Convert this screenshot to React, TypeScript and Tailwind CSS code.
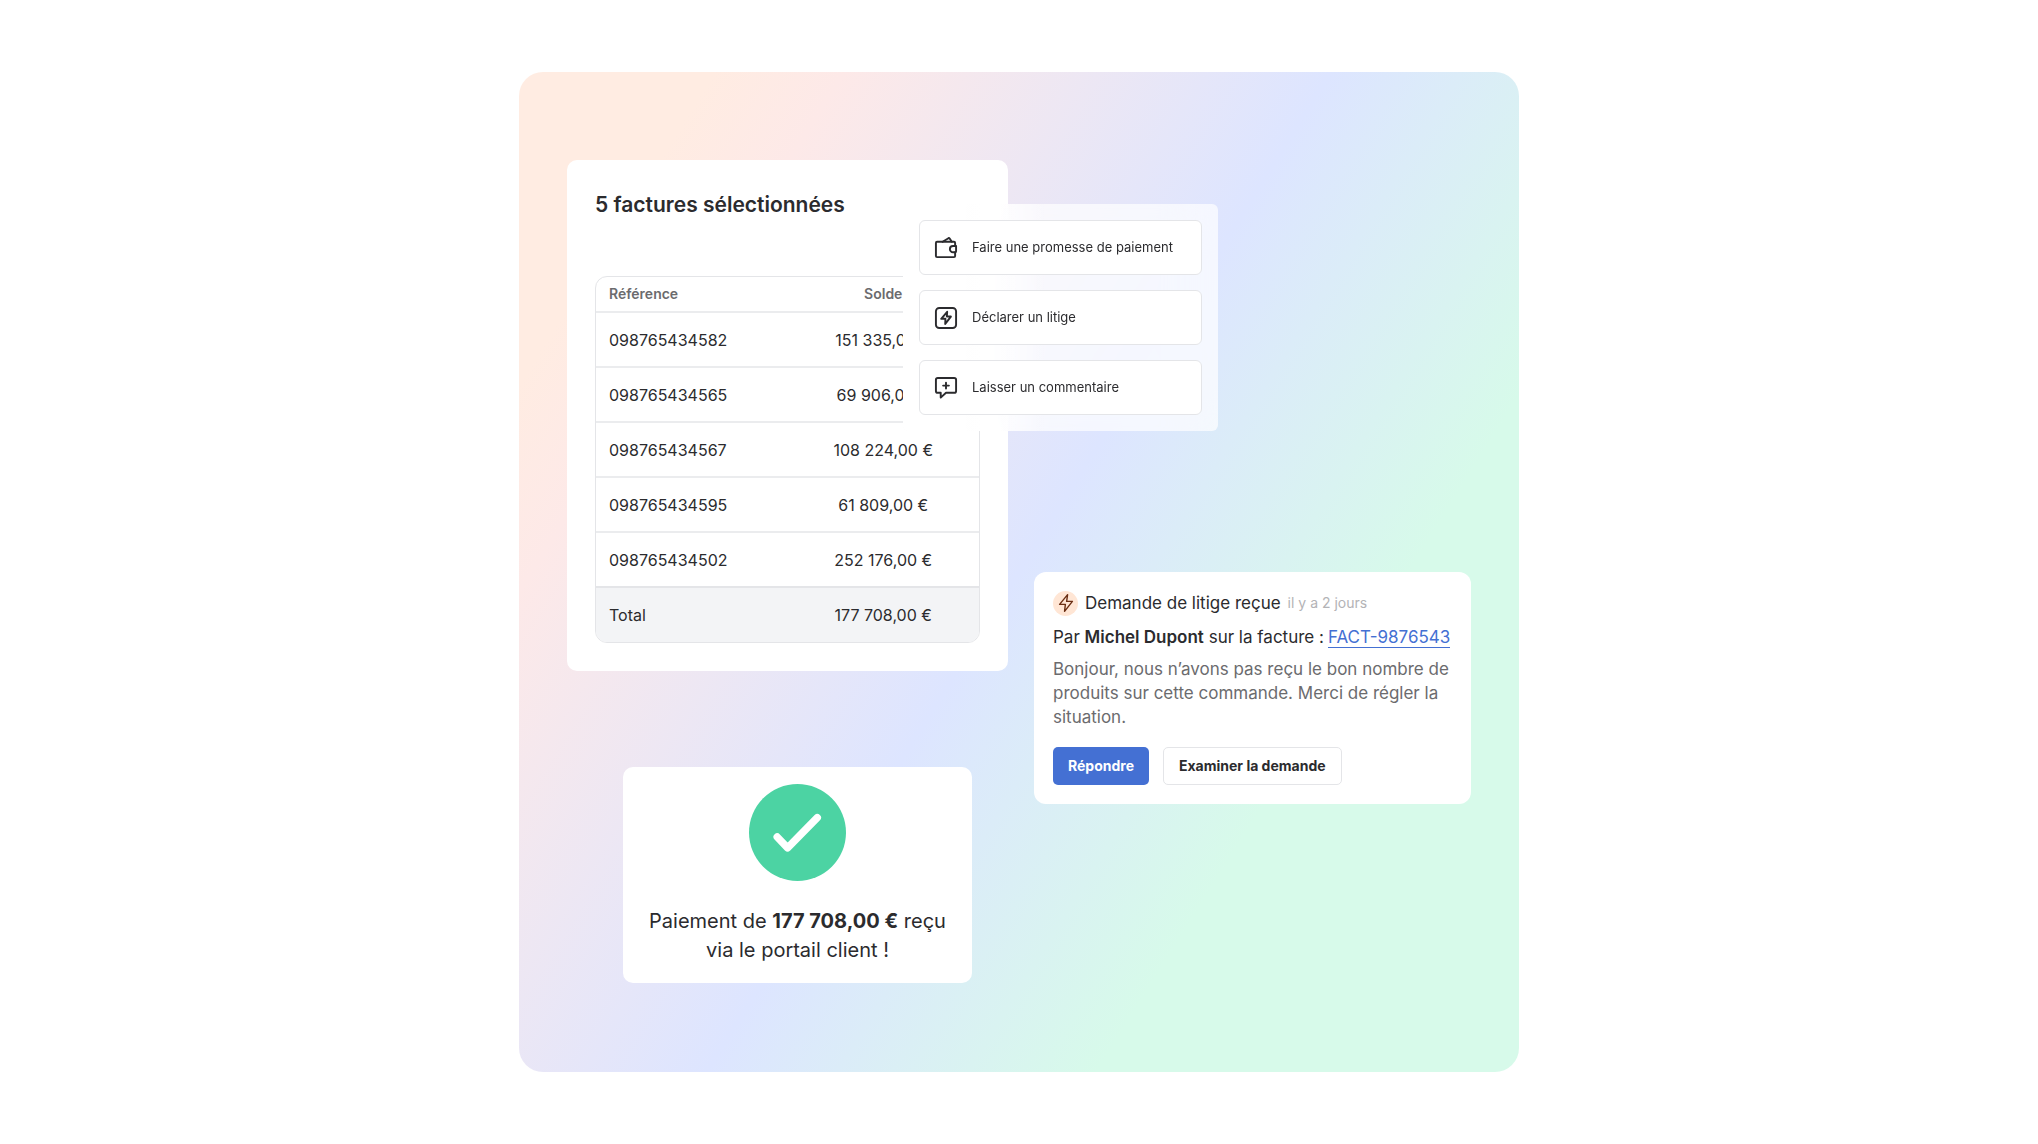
import type { ReactNode } from "react";

type Invoice = { reference: string; balance: string };

const invoices: Invoice[] = [
  { reference: "098765434582", balance: "151 335,00 €" },
  { reference: "098765434565", balance: "69 906,00 €" },
  { reference: "098765434567", balance: "108 224,00 €" },
  { reference: "098765434595", balance: "61 809,00 €" },
  { reference: "098765434502", balance: "252 176,00 €" },
];

function Icon({ children, className }: { children: ReactNode; className: string }) {
  return (
    <svg viewBox="0 0 25 25" fill="none" stroke="currentColor" strokeLinecap="round" strokeLinejoin="round" aria-hidden="true" className={className}>
      {children}
    </svg>
  );
}

const actions = [
  {
    label: "Faire une promesse de paiement",
    icon: (
      <>
        <path d="M22 10.5V7.2A1.2 1.2 0 0 0 20.8 6H3.2A1.2 1.2 0 0 0 2 7.2v13.6A1.2 1.2 0 0 0 3.2 22h17.6a1.2 1.2 0 0 0 1.2-1.2V17" />
        <path d="M9 6l6-3.7a1 1 0 0 1 1.3.3L18.5 6" />
        <path d="M23 10.5h-3.2a3.25 3.25 0 0 0 0 6.5H22a1 1 0 0 0 1-1z" />
      </>
    ),
  },
  {
    label: "Déclarer un litige",
    icon: (
      <>
        <rect x="2" y="2" width="21" height="21" rx="3.5" />
        <path d="M13.7 6L7.5 13.3h4.4l-.2 5.4L17.600 11h-4.200z" />
      </>
    ),
  },
  {
    label: "Laisser un commentaire",
    icon: (
      <>
        <path d="M4 2h17a2 2 0 0 1 2 2v11.5a2 2 0 0 1-2 2h-8.500L7 22.500v-5H4a2 2 0 0 1-2-2V4a2 2 0 0 1 2-2z" />
        <path d="M12.500 7v6M9.500 10h6" />
      </>
    ),
  },
];

function InvoiceCard() {
  return (
    <section className="rounded-[10px] bg-white px-7 pt-[29px] pb-7">
      <h2 className="text-[21px] leading-8 font-semibold">5 factures sélectionnées</h2>
      <div className="mt-[55px] overflow-hidden rounded-xl border border-[#e4e5e8]">
        <table className="w-full table-fixed text-base">
          <thead>
            <tr className="h-[35px] text-sm text-[#6b6b6e]">
              <th className="pl-[13px] text-left font-semibold">Référence</th>
              <th className="text-center font-semibold">Solde</th>
            </tr>
          </thead>
          <tbody>
            {invoices.map((invoice) => (
              <tr key={invoice.reference} className="h-[55px] border-t-2 border-[#ebecee]">
                <td className="pl-[13px]">{invoice.reference}</td>
                <td className="text-center">{invoice.balance}</td>
              </tr>
            ))}
          </tbody>
          <tfoot>
            <tr className="h-[55px] border-t-2 border-[#e4e5e8] bg-[#f3f4f6]">
              <td className="pl-[13px]">Total</td>
              <td className="text-center">177 708,00 €</td>
            </tr>
          </tfoot>
        </table>
      </div>
    </section>
  );
}

function ActionMenu() {
  return (
    <div className="absolute top-11 left-[336px] flex w-[315px] flex-col gap-[15px] rounded-md bg-linear-to-r from-white from-20% to-white/70 to-45% p-4 backdrop-blur-xl">
      {actions.map((action) => (
        <button key={action.label} type="button" className="flex h-[55px] items-center gap-3.5 rounded-md border border-[#e4e5e8] bg-white px-3.5 text-[13px]">
          <Icon className="size-6 shrink-0 stroke-2">{action.icon}</Icon>
          {action.label}
        </button>
      ))}
    </div>
  );
}

function PaymentCard() {
  return (
    <section className="mt-24 ml-14 w-[349px] rounded-[10px] bg-white px-5 pt-[17px] pb-[18px] text-center">
      <svg viewBox="0 0 98 98" aria-hidden="true" className="mx-auto size-[97px]">
        <circle cx="49" cy="49" r="49" fill="#4cd3a3" />
        <path d="M28.5 53.5L39 64.5L69 34" fill="none" stroke="#fff" strokeWidth="7.5" strokeLinecap="round" strokeLinejoin="round" />
      </svg>
      <p className="mt-[26px] text-xl leading-[29px]">
        Paiement de <b className="font-bold">177 708,00 €</b> reçu
        <br />
        via le portail client !
      </p>
    </section>
  );
}

function DisputeCard() {
  return (
    <section className="mt-[412px] min-w-0 flex-1 self-start rounded-xl bg-white p-[19px]">
      <div className="flex h-6 items-center gap-[7px]">
        <span className="flex size-[25px] items-center justify-center rounded-full bg-[#ffe6d5]">
          <Icon className="size-5 stroke-[1.75] text-[#6b2f14]">
            <path d="M14.5 2L4.500 14.200h7.200L10.700 23L20.500 10.500h-7.200z" />
          </Icon>
        </span>
        <h3 className="text-[17px] leading-6">Demande de litige reçue</h3>
        <time className="text-sm text-[#b3b3b6]">il y a 2 jours</time>
      </div>
      <p className="mt-2.5 text-[17px] leading-6 whitespace-nowrap">
        Par <b className="font-semibold">Michel Dupont</b> sur la facture :
        <a href="#facture" className="ml-1 border-b border-[#4470d3] text-[#4470d3]">FACT-9876543</a>
      </p>
      <p className="mt-2 text-[17px] leading-6 text-[#6b6b6e]">
        Bonjour, nous n’avons pas reçu le bon nombre de produits sur cette commande. Merci de régler la situation.
      </p>
      <div className="mt-[18px] flex gap-[14px]">
        <button type="button" className="h-[38px] rounded-[5px] bg-[#4470d3] px-[15px] text-sm font-bold text-white">Répondre</button>
        <button type="button" className="h-[38px] rounded-[5px] border border-[#e4e5e8] bg-white px-[15px] text-sm font-bold">Examiner la demande</button>
      </div>
    </section>
  );
}

export default function App() {
  return (
    <main className="flex min-h-screen items-center justify-center bg-white font-[Inter,sans-serif] text-[#2b2b2e]">
      <div className="flex aspect-square w-full max-w-[1000px] gap-[26px] rounded-3xl bg-[linear-gradient(122deg,#ffece2_12%,#fde9e8_20%,#dde5ff_50%,#d7faea_74%)] px-12 pt-[88px]">
        <div className="relative w-[441px] shrink-0">
          <InvoiceCard />
          <PaymentCard />
          <ActionMenu />
        </div>
        <DisputeCard />
      </div>
    </main>
  );
}
